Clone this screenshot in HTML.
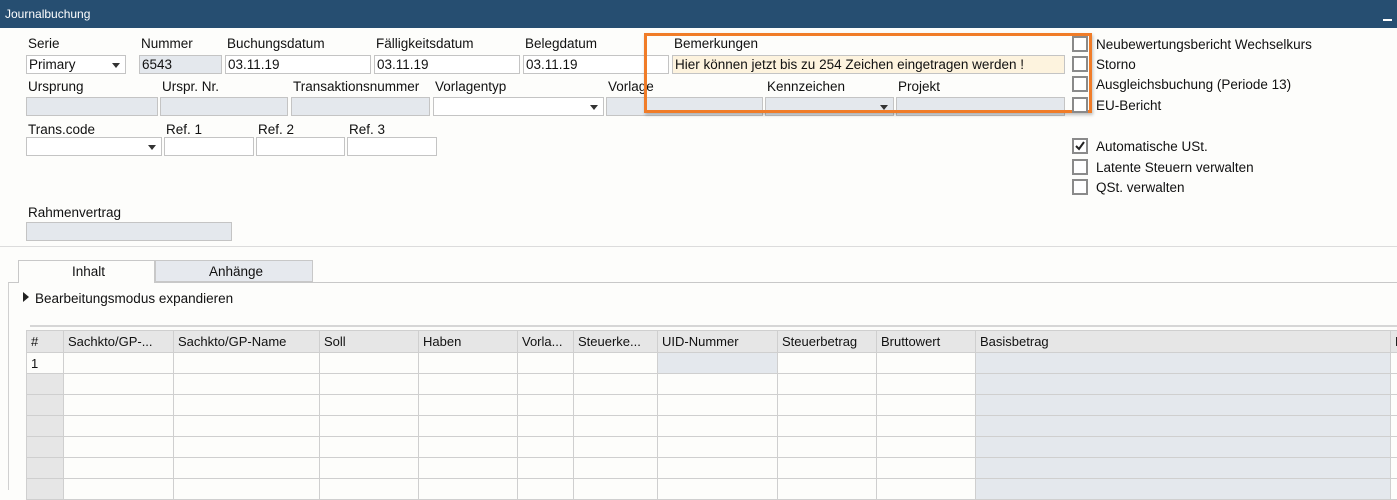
<!DOCTYPE html><html><head><meta charset="utf-8"><style>
*{margin:0;padding:0;box-sizing:border-box}
body{width:1397px;height:490px;overflow:hidden;background:#fdfdfb;font-family:"Liberation Sans",sans-serif;font-size:13px;color:#111;position:relative}
.a{position:absolute}
.t{position:absolute;white-space:nowrap;font-size:13.5px}
.i{position:absolute;height:19px;border:1px solid #c4c4c4;background:#fff;font-size:13.5px;padding:1px 2px;line-height:15px}
.g{background:#e4e8ed}
.dd::after{content:"";position:absolute;right:5px;top:7px;border-left:4px solid transparent;border-right:4px solid transparent;border-top:5px solid #333}
.cb{position:absolute;left:1072px;width:16px;height:16px;border:2px solid #8a8a8a;background:#fff}
.cl{position:absolute;left:1096px;font-size:13.5px;white-space:nowrap}
table{position:absolute;left:26px;top:330px;border-collapse:collapse;table-layout:fixed;width:1384px}
td{border:1px solid #cfcfcf;height:21px;font-size:13px;padding:0 4px;white-space:nowrap;overflow:hidden}
tr.h td{background:#e6e6e6;height:22px}
</style></head><body>
<div class="a" style="left:0;top:0;width:1397px;height:28px;background:#264e71"></div>
<div class="t" style="left:5px;top:7px;color:#fff;font-size:12px">Journalbuchung</div>
<div class="a" style="left:1383px;top:19px;width:9px;height:2px;background:#fff"></div>

<div class="t" style="left:28px;top:36px">Serie</div>
<div class="t" style="left:141px;top:36px">Nummer</div>
<div class="t" style="left:227px;top:36px">Buchungsdatum</div>
<div class="t" style="left:376px;top:36px">Fälligkeitsdatum</div>
<div class="t" style="left:525px;top:36px">Belegdatum</div>
<div class="t" style="left:674px;top:36px">Bemerkungen</div>
<div class="i dd" style="left:26px;top:55px;width:100px">Primary</div>
<div class="i g" style="left:139px;top:55px;width:83px">6543</div>
<div class="i" style="left:225px;top:55px;width:146px">03.11.19</div>
<div class="i" style="left:374px;top:55px;width:146px">03.11.19</div>
<div class="i" style="left:523px;top:55px;width:146px">03.11.19</div>
<div class="i" style="left:672px;top:55px;width:393px;background:#fdf3de">Hier können jetzt bis zu 254 Zeichen eingetragen werden !</div>

<div class="t" style="left:28px;top:79px">Ursprung</div>
<div class="t" style="left:162px;top:79px">Urspr. Nr.</div>
<div class="t" style="left:293px;top:79px">Transaktionsnummer</div>
<div class="t" style="left:435px;top:79px">Vorlagentyp</div>
<div class="t" style="left:608px;top:79px">Vorlage</div>
<div class="t" style="left:767px;top:79px">Kennzeichen</div>
<div class="t" style="left:898px;top:79px">Projekt</div>
<div class="i g" style="left:26px;top:97px;width:132px"></div>
<div class="i g" style="left:160px;top:97px;width:128px"></div>
<div class="i g" style="left:291px;top:97px;width:139px"></div>
<div class="i dd" style="left:433px;top:97px;width:171px"></div>
<div class="i g" style="left:606px;top:97px;width:157px"></div>
<div class="i g dd" style="left:765px;top:97px;width:129px"></div>
<div class="i g" style="left:896px;top:97px;width:169px"></div>

<div class="t" style="left:28px;top:122px">Trans.code</div>
<div class="t" style="left:166px;top:122px">Ref. 1</div>
<div class="t" style="left:258px;top:122px">Ref. 2</div>
<div class="t" style="left:349px;top:122px">Ref. 3</div>
<div class="i dd" style="left:26px;top:137px;width:136px"></div>
<div class="i" style="left:164px;top:137px;width:90px"></div>
<div class="i" style="left:256px;top:137px;width:89px"></div>
<div class="i" style="left:347px;top:137px;width:90px"></div>

<div class="t" style="left:28px;top:205px">Rahmenvertrag</div>
<div class="i g" style="left:26px;top:222px;width:206px"></div>

<div class="a" style="left:644px;top:33px;width:448px;height:80px;border:3px solid #f07c28;box-shadow:1px 2px 3px rgba(0,0,0,.25)"></div>

<div class="cb" style="top:36px"></div><div class="cl" style="top:37px">Neubewertungsbericht Wechselkurs</div>
<div class="cb" style="top:56px"></div><div class="cl" style="top:57px">Storno</div>
<div class="cb" style="top:76px"></div><div class="cl" style="top:77px">Ausgleichsbuchung (Periode 13)</div>
<div class="cb" style="top:97px"></div><div class="cl" style="top:98px">EU-Bericht</div>
<div class="cb" style="top:138px"><svg width="12" height="12" style="position:absolute;left:0;top:0"><path d="M2 6 L5 9 L10 2" stroke="#222" stroke-width="2" fill="none"/></svg></div><div class="cl" style="top:139px">Automatische USt.</div>
<div class="cb" style="top:159px"></div><div class="cl" style="top:160px">Latente Steuern verwalten</div>
<div class="cb" style="top:179px"></div><div class="cl" style="top:180px">QSt. verwalten</div>

<div class="a" style="left:0;top:246px;width:1397px;height:1px;background:#dcdcdc"></div>
<div class="a" style="left:8px;top:282px;width:1389px;height:208px;border-left:1px solid #d0d0d0;border-top:1px solid #c8c8c8"></div>
<div class="a" style="left:18px;top:260px;width:137px;height:23px;background:#fdfdfb;border:1px solid #c8c8c8;border-bottom:none"></div>
<div class="t" style="left:72px;top:264px">Inhalt</div>
<div class="a" style="left:155px;top:260px;width:158px;height:22px;background:#e6e9ee;border:1px solid #c8c8c8"></div>
<div class="t" style="left:209px;top:264px">Anhänge</div>
<div class="a" style="left:23px;top:292px;border-top:5px solid transparent;border-bottom:5px solid transparent;border-left:6px solid #222"></div>
<div class="t" style="left:35px;top:291px">Bearbeitungsmodus expandieren</div>
<div class="a" style="left:30px;top:325px;width:1367px;height:2px;background:#d6d6d6"></div>

<table>
<colgroup><col style="width:37px"><col style="width:110px"><col style="width:146px"><col style="width:99px"><col style="width:99px"><col style="width:56px"><col style="width:84px"><col style="width:120px"><col style="width:99px"><col style="width:99px"><col style="width:415px"><col style="width:20px"></colgroup>
<tr class="h"><td>#</td><td>Sachkto/GP-...</td><td>Sachkto/GP-Name</td><td>Soll</td><td>Haben</td><td>Vorla...</td><td>Steuerke...</td><td>UID-Nummer</td><td>Steuerbetrag</td><td>Bruttowert</td><td>Basisbetrag</td><td>D</td></tr>
<tr><td>1</td><td></td><td></td><td></td><td></td><td></td><td></td><td class="g"></td><td></td><td></td><td class="g"></td><td></td></tr>
<tr><td style="background:#e6e6e6"></td><td></td><td></td><td></td><td></td><td></td><td></td><td></td><td></td><td></td><td class="g"></td><td></td></tr>
<tr><td style="background:#e6e6e6"></td><td></td><td></td><td></td><td></td><td></td><td></td><td></td><td></td><td></td><td class="g"></td><td></td></tr>
<tr><td style="background:#e6e6e6"></td><td></td><td></td><td></td><td></td><td></td><td></td><td></td><td></td><td></td><td class="g"></td><td></td></tr>
<tr><td style="background:#e6e6e6"></td><td></td><td></td><td></td><td></td><td></td><td></td><td></td><td></td><td></td><td class="g"></td><td></td></tr>
<tr><td style="background:#e6e6e6"></td><td></td><td></td><td></td><td></td><td></td><td></td><td></td><td></td><td></td><td class="g"></td><td></td></tr>
<tr><td style="background:#e6e6e6"></td><td></td><td></td><td></td><td></td><td></td><td></td><td></td><td></td><td></td><td class="g"></td><td></td></tr>
</table>
</body></html>
